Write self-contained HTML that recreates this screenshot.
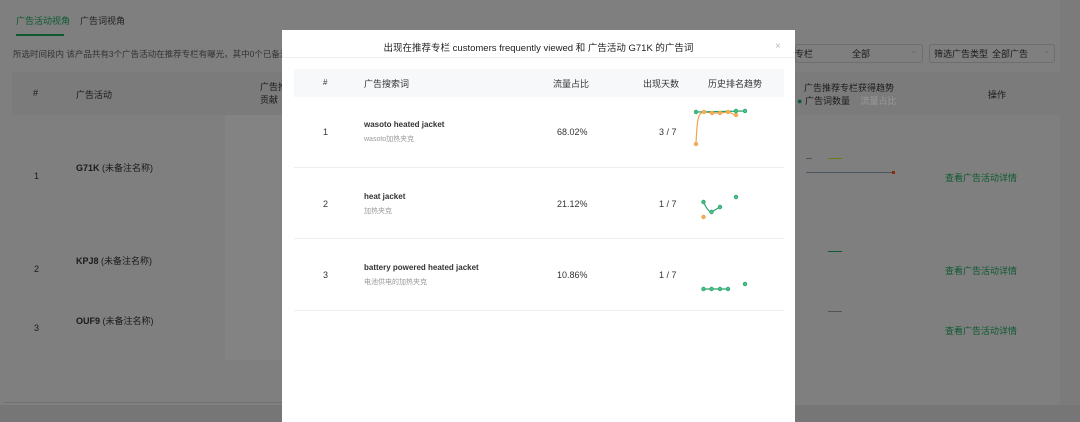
<!DOCTYPE html>
<html><head><meta charset="utf-8"><style>
*{margin:0;padding:0;box-sizing:border-box}
body{width:1080px;height:422px;overflow:hidden;position:relative;background:#7f7f7f;font-family:"Liberation Sans","Noto Sans CJK SC",sans-serif;font-size:9px;color:#1a1a1a}
.a{position:absolute;white-space:nowrap}
.g{color:#0d5a32}
.m{position:absolute;left:282px;top:30px;width:513px;height:392px;background:#fff}
.m .a{color:#333}
</style></head><body>
<div class="a" style="left:0;top:0;width:1080px;height:405px;background:#7f7f7f"></div>
<div class="a" style="left:0;top:405px;width:1080px;height:17px;background:#767676"></div>
<div class="a" style="left:1060px;top:0;width:20px;height:405px;background:#7b7b7b"></div>
<div class="a g" style="left:16px;top:14px;font-size:9px">广告活动视角</div>
<div class="a" style="left:16px;top:34px;width:48px;height:2px;background:#0d5a32"></div>
<div class="a" style="left:80px;top:14px;color:#222">广告词视角</div>
<div class="a" style="left:13px;top:48px;color:#333;font-size:8.5px">所选时间段内 该产品共有3个广告活动在推荐专栏有曝光，其中0个已备注名</div>
<div class="a" style="left:12px;top:72px;width:1048px;height:43px;background:#7b7b7b"></div>
<div class="a" style="left:33px;top:88px">#</div>
<div class="a" style="left:76px;top:88px">广告活动</div>
<div class="a" style="left:260px;top:80px">广告推<br>贡献</div>
<div class="a" style="left:225px;top:115px;width:57px;height:245px;background:#838383"></div>
<div class="a" style="left:34px;top:171px">1</div>
<div class="a" style="left:76px;top:161px"><b>G71K</b> (未备注名称)</div>
<div class="a" style="left:34px;top:264px">2</div>
<div class="a" style="left:76px;top:254px"><b>KPJ8</b> (未备注名称)</div>
<div class="a" style="left:34px;top:323px">3</div>
<div class="a" style="left:76px;top:314px"><b>OUF9</b> (未备注名称)</div>
<div class="a" style="left:4px;top:402px;width:278px;height:1px;background:#717171"></div>
<div class="a" style="left:795px;top:44px;width:128px;height:19px;border:1px solid #6e6e6e;border-radius:3px"></div>
<div class="a" style="left:795px;top:47px">专栏</div>
<div class="a" style="left:852px;top:47px">全部</div>
<div class="a" style="left:910px;top:45px;color:#666">⌄</div>
<div class="a" style="left:929px;top:44px;width:126px;height:19px;border:1px solid #6e6e6e;border-radius:3px"></div>
<div class="a" style="left:934px;top:47px">筛选广告类型</div>
<div class="a" style="left:992px;top:47px">全部广告</div>
<div class="a" style="left:1043px;top:45px;color:#666">⌄</div>
<div class="a" style="left:804px;top:81px">广告推荐专栏获得趋势</div>
<div class="a" style="left:797px;top:94px"><span style="color:#0d5a32">●</span> 广告词数量 <span style="color:#999;margin-left:8px">流量占比</span></div>
<div class="a" style="left:988px;top:88px">操作</div>
<div class="a" style="left:806px;top:158px;width:6px;height:1px;background:#555"></div>
<div class="a" style="left:828px;top:158px;width:14px;height:1px;background:#6b7a1a"></div>
<div class="a" style="left:806px;top:172px;width:88px;height:1px;background:#4a5560"></div>
<div class="a" style="left:892px;top:171px;width:3px;height:3px;background:#8a2a0a"></div>
<div class="a" style="left:828px;top:251px;width:14px;height:1px;background:#0d5a32"></div>
<div class="a" style="left:828px;top:311px;width:14px;height:1px;background:#555"></div>
<div class="a g" style="left:945px;top:171px">查看广告活动详情</div>
<div class="a g" style="left:945px;top:264px">查看广告活动详情</div>
<div class="a g" style="left:945px;top:324px">查看广告活动详情</div>

<div class="m">
<div class="a" style="left:0;top:10px;width:513px;text-align:center;font-size:9.5px;color:#222">出现在推荐专栏 customers frequently viewed 和 广告活动 G71K 的广告词</div>
<div class="a" style="left:493px;top:11px;color:#bbb;font-size:10px">×</div>
<div class="a" style="left:0;top:27px;width:513px;height:1px;background:#eee"></div>
<div class="a" style="left:12px;top:39px;width:490px;height:28px;background:#f6f8fa"></div>
<div class="a" style="left:41px;top:48px;font-size:8px">#</div>
<div class="a" style="left:82px;top:47px">广告搜索词</div>
<div class="a" style="left:271px;top:47px">流量占比</div>
<div class="a" style="left:361px;top:47px">出现天数</div>
<div class="a" style="left:426px;top:47px">历史排名趋势</div>
<div class="a" style="left:12px;top:137px;width:490px;height:1px;background:#eee"></div>
<div class="a" style="left:12px;top:208px;width:490px;height:1px;background:#eee"></div>
<div class="a" style="left:12px;top:280px;width:490px;height:1px;background:#eee"></div>
<div class="a" style="left:41px;top:97px">1</div>
<div class="a" style="left:82px;top:90px;font-weight:bold;font-size:8px">wasoto heated jacket</div>
<div class="a" style="left:82px;top:104px;font-size:7px;color:#999">wasoto加热夹克</div>
<div class="a" style="left:275px;top:97px">68.02%</div>
<div class="a" style="left:377px;top:97px">3 / 7</div>
<div class="a" style="left:41px;top:169px">2</div>
<div class="a" style="left:82px;top:162px;font-weight:bold;font-size:8px">heat jacket</div>
<div class="a" style="left:82px;top:176px;font-size:7px;color:#999">加热夹克</div>
<div class="a" style="left:275px;top:169px">21.12%</div>
<div class="a" style="left:377px;top:169px">1 / 7</div>
<div class="a" style="left:41px;top:240px">3</div>
<div class="a" style="left:82px;top:233px;font-weight:bold;font-size:8px">battery powered heated jacket</div>
<div class="a" style="left:82px;top:247px;font-size:7px;color:#999">电池供电的加热夹克</div>
<div class="a" style="left:275px;top:240px">10.86%</div>
<div class="a" style="left:377px;top:240px">1 / 7</div>
</div>
<svg class="a" style="left:0;top:0" width="1080" height="422">
<g fill="none" stroke-width="1.2">
<path d="M696 144 C697 120 698 112 704 112 L712 113 720 113 728 112 736 115" stroke="#f0a54a"/>
<path d="M696 112 L745 111" stroke="#2aa56a"/>
<path d="M703.5 202 Q708 212 711.5 212 L720 207" stroke="#2aa56a"/>
<path d="M703.5 289 L728 289" stroke="#2aa56a"/>
</g>
<g fill="#f0b060" stroke="#f0a54a" stroke-width="0.8">
<circle cx="696" cy="144" r="1.8"/><circle cx="704" cy="112" r="1.8"/><circle cx="712" cy="113" r="1.8"/><circle cx="720" cy="113" r="1.8"/><circle cx="728" cy="112" r="1.8"/><circle cx="736" cy="115" r="1.8"/><circle cx="703.5" cy="217" r="1.8"/>
</g>
<g fill="#4cc08a" stroke="#2aa56a" stroke-width="0.8">
<circle cx="696" cy="112" r="1.8"/><circle cx="745" cy="111" r="1.8"/><circle cx="736" cy="111" r="1.8"/>
<circle cx="703.5" cy="202" r="1.8"/><circle cx="711.5" cy="212" r="1.8"/><circle cx="720" cy="207" r="1.8"/><circle cx="736" cy="197" r="1.8"/>
<circle cx="703.5" cy="289" r="1.8"/><circle cx="711.5" cy="289" r="1.8"/><circle cx="720" cy="289" r="1.8"/><circle cx="728" cy="289" r="1.8"/><circle cx="745" cy="284" r="1.8"/>
</g>
</svg>
</body></html>
